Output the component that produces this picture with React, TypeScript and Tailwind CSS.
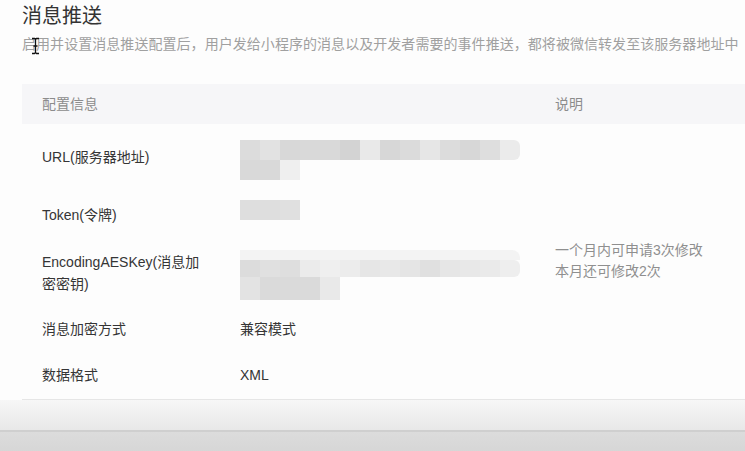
import React from "react";

const font = { fontFamily: '"Liberation Sans", "Noto Sans CJK SC", sans-serif' };

function Cells({ colors, className }: { colors: string[]; className?: string }) {
  return (
    <div className={"flex " + (className ?? "")}>
      {colors.map((c, i) => (
        <div key={i} className="h-full w-[20px]" style={{ backgroundColor: c }} />
      ))}
    </div>
  );
}

export default function App() {
  return (
    <div style={font} className="relative h-[451px] w-[745px] overflow-hidden bg-[#fdfdfd] text-[#353535]">
      <div className="pl-[22px]">
        <h1 className="pt-[3px] text-[20px] leading-[26px] text-[#333]">消息推送</h1>
        <p className="mt-[4px] whitespace-nowrap text-[14px] leading-[22px] tracking-[0.05px] text-[#a0a0a0]">
          启用并设置消息推送配置后，用户发给小程序的消息以及开发者需要的事件推送，都将被微信转发至该服务器地址中
        </p>
      </div>

      {/* text cursor */}
      <svg className="absolute left-[31px] top-[37px]" width="9" height="18" viewBox="0 0 9 18">
        <path d="M1 1.5 H3.5 L4.5 2.5 L5.5 1.5 H8 M4.5 2.5 V15.5 M1 16.5 H3.5 L4.5 15.5 L5.5 16.5 H8 M2.5 9 H6.5" stroke="#111" strokeWidth="1.3" fill="none" />
      </svg>

      <div className="ml-[22px] mt-[29px] text-[14px]">
        {/* header */}
        <div className="flex h-[40px] items-center bg-[#f6f6f8] text-[#8c8c8c]">
          <div className="pl-[20px]">配置信息</div>
          <div className="ml-[457px]">说明</div>
        </div>

        {/* URL */}
        <div className="flex h-[66px] items-center">
          <div className="w-[218px] pl-[20px]">URL(服务器地址)</div>
          <div className="mt-[6px] flex flex-col">
            <Cells
              className="h-[20px] overflow-hidden rounded-r-[6px]"
              colors={["#dcdcdc", "#e2e2e2", "#d8d8d8", "#d9d9d9", "#d9d9d9", "#d3d3d3", "#e9e9e9", "#d7d7d7", "#dbdbdb", "#e6e6e6", "#dcdcdc", "#d7d7d7", "#dedede", "#ebebeb"]}
            />
            <Cells className="h-[20px]" colors={["#d9d9d9", "#d9d9d9", "#efefef"]} />
          </div>
        </div>

        {/* Token */}
        <div className="flex h-[50px] items-center">
          <div className="w-[218px] pl-[20px]">Token(令牌)</div>
          <Cells className="mb-[10px] h-[20px]" colors={["#dedede", "#dedede", "#e0e0e0"]} />
        </div>

        {/* EncodingAESKey */}
        <div className="flex h-[66px] items-center">
          <div className="w-[218px] pl-[20px] pr-[40px] leading-[22px]">EncodingAESKey(消息加密密钥)</div>
          <div className="mt-[4px] flex flex-col">
            <div className="h-[10px] w-[280px] rounded-tr-[8px] bg-[#f3f3f3]" />
            <Cells
              className="h-[17px] overflow-hidden rounded-r-[6px]"
              colors={["#dcdcdc", "#e0e0e0", "#dedede", "#ebebeb", "#efefef", "#ececec", "#e6e6e6", "#e8e8e8", "#e5e5e5", "#e0e0e0", "#e6e6e6", "#e8e8e8", "#eaeaea", "#eeeeee"]}
            />
            <Cells className="h-[23px]" colors={["#e3e3e3", "#dadada", "#dadada", "#dadada", "#e9e9e9"]} />
          </div>
          <div className="ml-[35px] self-start leading-[21px] text-[#8f8f8f]">
            <div>一个月内可申请3次修改</div>
            <div>本月还可修改2次</div>
          </div>
        </div>

        {/* 加密方式 */}
        <div className="flex h-[46px] items-center">
          <div className="w-[218px] pl-[20px]">消息加密方式</div>
          <div>兼容模式</div>
        </div>

        {/* 数据格式 */}
        <div className="flex h-[48px] items-center border-b border-[#e6e6e6]">
          <div className="w-[218px] pl-[20px]">数据格式</div>
          <div>XML</div>
        </div>
      </div>

      {/* bottom bar */}
      <div className="h-[30px] bg-gradient-to-b from-[#f7f7f7] to-[#e8e8e8]" />
      <div className="h-[2px] bg-[#cfcfcf]" />
      <div className="h-[30px] bg-gradient-to-b from-[#dcdcdc] to-[#d3d3d3]" />
    </div>
  );
}
